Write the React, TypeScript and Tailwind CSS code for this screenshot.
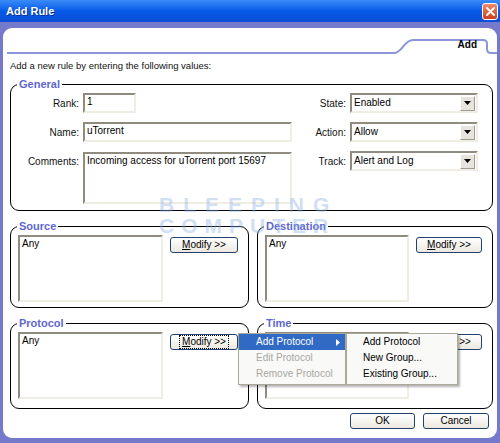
import React from "react"

function Sunken({ className = "", children }: { className?: string; children?: React.ReactNode }) {
  return (
    <div
      className={`border-2 border-t-[#8f8b7f] border-l-[#8f8b7f] border-b-[#efede4] border-r-[#efede4] bg-white pl-[2px] text-[10px] leading-[14px] text-black ${className}`}
    >
      {children}
    </div>
  )
}

function Select({ value }: { value: string }) {
  return (
    <Sunken className="flex h-[20px] items-center justify-between pr-[1px]">
      <span>{value}</span>
      <div className="flex h-[15px] w-[15px] items-center justify-center border border-t-white border-l-white border-b-[#9d9a8f] border-r-[#9d9a8f] bg-[#e6e4dc]">
        <svg width="7" height="4" viewBox="0 0 7 4">
          <path d="M0 0 H7 L3.5 4 Z" fill="#000" />
        </svg>
      </div>
    </Sunken>
  )
}

function XpButton({ label, className = "", focus = false, underline = true }: { label: string; className?: string; focus?: boolean; underline?: boolean }) {
  const text = underline ? (
    <span>
      <span className="underline">{label[0]}</span>
      {label.slice(1)}
    </span>
  ) : (
    <span>{label}</span>
  )
  return (
    <div
      className={`flex h-[16px] items-center justify-center rounded-[3px] border border-[#23406f] bg-linear-to-b from-white to-[#ebe9df] text-[10px] leading-[12px] text-black ${className}`}
    >
      {focus ? <span className="border border-dotted border-black px-[2px]">{text}</span> : text}
    </div>
  )
}

function Group({ title, className = "", children }: { title: string; className?: string; children?: React.ReactNode }) {
  return (
    <fieldset className={`rounded-[9px] border border-black ${className}`}>
      <legend className="ml-[6px] px-[2px] text-[11px] font-bold leading-[13px] text-[#5e68cf]">{title}</legend>
      {children}
    </fieldset>
  )
}

function Label({ children, top = false }: { children: React.ReactNode; top?: boolean }) {
  return (
    <div className={`flex h-[20px] items-center justify-end pr-[4px] text-[10px] text-[#111] ${top ? "self-start" : ""}`}>
      {children}
    </div>
  )
}

function ListGroup({ title, className = "", pad, listW, gap, btnW, focus = false }: { title: string; className?: string; pad: string; listW: string; gap: string; btnW: string; focus?: boolean }) {
  return (
    <Group title={title} className={className}>
      <div className={`flex pt-[2px] ${pad} ${gap}`}>
        <Sunken className={`h-[67px] ${listW}`}>Any</Sunken>
        <XpButton label="Modify >>" className={`mt-[2px] ${btnW}`} focus={focus} />
      </div>
    </Group>
  )
}

export default function App() {
  return (
    <div className="relative flex h-[443px] w-[500px] flex-col overflow-hidden bg-[#7479cb] font-['Liberation_Sans',Arial,sans-serif] text-black">
      {/* Title bar */}
      <div className="flex h-[22px] items-center justify-between bg-linear-to-b from-[#3a8cf8] via-[#0659e8] to-[#0a4fd5] pl-[6px] pr-[2px]">
        <span className="text-[11px] font-bold text-white [text-shadow:1px_1px_0_#0b2f8a]">Add Rule</span>
        <div className="flex h-[17px] w-[16px] items-center justify-center rounded-[3px] border border-white bg-linear-to-b from-[#ee8b68] to-[#cc3d1b]">
          <svg width="9" height="9" viewBox="0 0 9 9">
            <path d="M1 1 L8 8 M8 1 L1 8" stroke="#fff" strokeWidth="1.8" strokeLinecap="round" />
          </svg>
        </div>
      </div>

      <div className="flex flex-1 flex-col px-[3px] pt-[6px] pb-[5px]">
        <div className="flex flex-1 flex-col rounded-[9px] bg-white">
          {/* Tab header */}
          <div className="relative flex h-[28px] items-end justify-end pr-[20px] pb-[5px]">
            <svg className="absolute left-0 top-0" width="494" height="28" viewBox="0 0 494 28">
              <path
                d="M4 25 H391 C399 25 401 12 410 12 H480 Q484 12 484 16 V21 Q484 25 488 25 H494"
                stroke="#8c94dc"
                strokeWidth="2"
                fill="none"
              />
            </svg>
            <span className="relative text-[10px] font-bold leading-[12px]">Add</span>
          </div>

          <div className="flex flex-col pl-[7px] pr-[4px]">
            <p className="mt-[4px] text-[9.5px] leading-[12px] text-[#111]">Add a new rule by entering the following values:</p>

            <Group title="General" className="mt-[6px] pb-[6px]">
              <div className="grid grid-cols-[72px_209px_58px_128px] gap-y-[9px] pt-[2px]">
                <Label>Rank:</Label>
                <div>
                  <Sunken className="h-[20px] w-[53px]">1</Sunken>
                </div>
                <Label>State:</Label>
                <Select value="Enabled" />

                <Label>Name:</Label>
                <Sunken className="h-[20px]">uTorrent</Sunken>
                <Label>Action:</Label>
                <Select value="Allow" />

                <Label top>Comments:</Label>
                <Sunken className="mt-[1px] h-[52px]">Incoming access for uTorrent port 15697</Sunken>
                <Label top>Track:</Label>
                <div className="self-start">
                  <Select value="Alert and Log" />
                </div>
              </div>
            </Group>

            <div className="mt-[9px] flex gap-[8px]">
              <ListGroup title="Source" className="w-[239px] pb-[5px]" pad="pl-[7px]" listW="w-[145px]" gap="gap-[7px]" btnW="w-[68px]" />
              <ListGroup title="Destination" className="flex-1 pb-[5px]" pad="pl-[7px]" listW="w-[144px]" gap="gap-[7px]" btnW="w-[66px]" />
            </div>

            <div className="mt-[9px] flex gap-[8px]">
              <ListGroup title="Protocol" className="w-[239px] pb-[9px]" pad="pl-[7px]" listW="w-[145px]" gap="gap-[7px]" btnW="w-[68px]" focus />
              <ListGroup title="Time" className="flex-1 pb-[9px]" pad="pl-[7px]" listW="w-[144px]" gap="gap-[7px]" btnW="w-[66px]" />
            </div>

            <div className="mt-[4px] flex justify-end gap-[8px] pr-[4px]">
              <XpButton label="OK" underline={false} className="w-[65px]" />
              <XpButton label="Cancel" underline={false} className="w-[66px]" />
            </div>
          </div>
        </div>
      </div>

      {/* Watermark */}
      <div className="pointer-events-none absolute left-[159px] top-[194px] flex flex-col text-[21px] font-bold leading-[21px] text-[#8fb0e8] opacity-40">
        <span className="tracking-[9px]">BLEEPING</span>
        <span className="tracking-[7px]">COMPUTER</span>
      </div>

      {/* Context menu */}
      <div className="absolute left-[238px] top-[333px] flex text-[10px] leading-[12px]">
        <div className="w-[108px] border border-[#aca899] bg-[#f9f9f7] pb-[2px] shadow-[2px_2px_2px_rgba(0,0,0,0.3)]">
          <div className="flex h-[16px] items-center justify-between bg-[#316ac5] pl-[17px] pr-[5px] text-white">
            <span>Add Protocol</span>
            <svg width="4" height="7" viewBox="0 0 4 7">
              <path d="M0 0 L4 3.5 L0 7 Z" fill="#fff" />
            </svg>
          </div>
          <div className="flex h-[16px] items-center pl-[17px] text-[#a8a7a1]">Edit Protocol</div>
          <div className="flex h-[16px] items-center pl-[17px] text-[#a8a7a1]">Remove Protocol</div>
        </div>
        <div className="w-[112px] border border-[#aca899] bg-[#f9f9f7] pb-[2px] shadow-[2px_2px_2px_rgba(0,0,0,0.3)]">
          <div className="flex h-[16px] items-center pl-[16px]">Add Protocol</div>
          <div className="flex h-[16px] items-center pl-[16px]">New Group...</div>
          <div className="flex h-[16px] items-center pl-[16px]">Existing Group...</div>
        </div>
      </div>
    </div>
  )
}
